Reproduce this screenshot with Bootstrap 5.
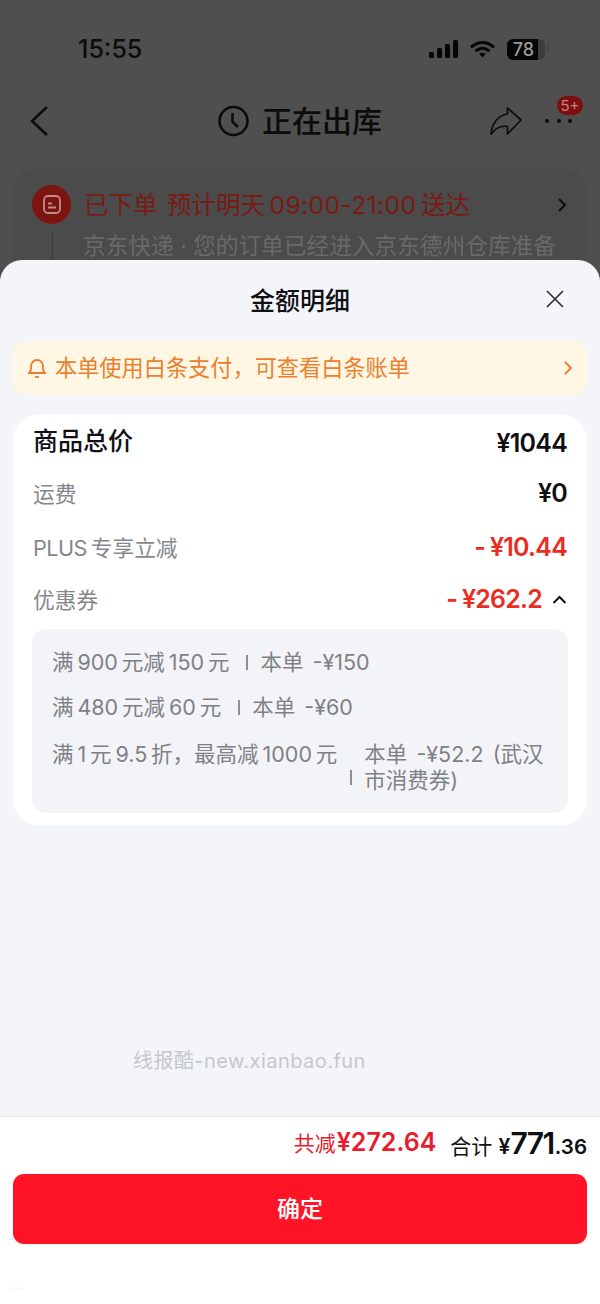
<!DOCTYPE html>
<html lang="zh-CN">
<head>
    <meta charset="UTF-8">
    <meta name="viewport" content="width=device-width, initial-scale=1.0">
    <title>金额明细</title>
    <link href="https://cdn.jsdelivr.net/npm/bootstrap@5.3.0/dist/css/bootstrap.min.css" rel="stylesheet">
    <style>
        html, body { height: 100%; }
        body { width: 600px; height: 1304px; overflow: hidden; background: #4f4f4f; color: #101014; font-family: Inter, "Noto Sans CJK SC", sans-serif; }
        .under { height: 260px; overflow: hidden; }
        .status-row { height: 96px; padding: 31px 51px 0 78px; }
        .status-time { font-size: 25px; font-weight: 500; line-height: 36px; color: #0c0c0c; }
        .status-icons { height: 36px; gap: 12px; }
        .batt { width: 38px; height: 21px; line-height: 21px; border-radius: 6px; background: linear-gradient(90deg, #060606 81%, #3e3e3e 81%); color: #9a9a9a; font-size: 18px; font-weight: 500; padding-right: 5px; text-align: center; }
        .batt-nub { width: 2px; height: 8px; margin-left: -10px; background: #454545; border-radius: 0 2px 2px 0; }
        .nav-row { height: 50px; padding: 0 28px; grid-template-columns: 1fr auto 1fr; }
        .nav-title { font-size: 30px; font-weight: 500; line-height: 50px; color: #0c0c0c; }
        .title-gap { gap: 13px; }
        .share-gap { gap: 23px; }
        .dots-wrap { width: 27px; height: 30px; }
        .dot-item { width: 4px; height: 4px; background: #0c0c0c; border-radius: 50%; }
        .dot-badge { top: -10px; right: -11px; width: 26px; height: 19px; background: #7c0f0f; color: #c98080; font-size: 15px; line-height: 19px; text-align: center; border-radius: 10px; }
        .order-card { margin: 22px 13px 0; height: 120px; padding: 17px 20px 0 19px; background: #4b4b4b; border-radius: 24px 24px 0 0; }
        .order-ico { width: 39px; height: 39px; border-radius: 50%; background: #7c1510; }
        .order-head { font-size: 24.6px; line-height: 38px; color: #7a1a14; margin-left: 5px; white-space: nowrap; word-spacing: 2px; }
        .head-time { letter-spacing: .4px; }
        .order-sub { font-size: 22.7px; line-height: 28px; color: #696969; margin: 8px 0 0 20px; padding: 0 0 10px 30px; border-left: 1px solid #3a3a3a; white-space: nowrap; }
        .sheet { height: 1044px; background: #f3f5f9; border-radius: 22px 22px 0 0; }
        .sheet-top { height: 82px; }
        .sheet-title { font-size: 25px; font-weight: 500; line-height: 82px; }
        .sheet-close { right: 36px; top: 30px; }
        .tip-bar { height: 52px; margin: 0 13px; padding: 0 14px; background: #fff7e3; border-radius: 12px; color: #ea7f2e; font-size: 22.2px; }
        .detail-card { margin: 20px 13px 0; padding: 10px 20px 12px; background: #fff; border-radius: 26px; }
        .line-a { height: 54px; }
        .line-b { height: 50px; }
        .line-top { height: 36px; margin-bottom: 7px; }
        .label-grey { font-size: 21.7px; color: #85878c; }
        .plus-tag { letter-spacing: -.6px; margin-right: 4px; }
        .label-main { font-size: 25px; font-weight: 500; }
        .amt { font-size: 25px; font-weight: 600; letter-spacing: -.8px; }
        .amt-first { padding-top: 4px; }
        .amt-red { color: #ea2d1e; }
        .minus-gap { margin-right: 5px; }
        .arrow-gap { gap: 10px; }
        .coupon-box { margin: 4px -1px 0 -1px; padding: 20px; background: #f3f4f8; border-radius: 14px; color: #808185; font-size: 21.5px; line-height: 26px; }
        .coupon-row { margin-top: 19px; }
        .coupon-row:first-child { margin-top: 0; }
        .coupon-row:last-child { margin-top: 21px; }
        .coupon-right { word-spacing: 3px; }
        .pipe { flex: none; width: 2px; height: 15px; background: #8f9095; margin: 0 12px 0 17px; }
        .pipe-low { margin-top: 20px; margin-left: 13px; }
        .spacer-area { flex: 1 1 auto; }
        .mark-text { padding-left: 133px; padding-bottom: 41px; font-size: 20px; line-height: 28px; color: #c6c7cb; letter-spacing: .45px; }
        .foot { height: 188px; background: #fff; border-top: 1px solid #ebecee; padding: 1px 13px 0; }
        .sum-row { height: 50px; gap: 14px; }
        .sum-red { color: #e81c2c; font-size: 21px; }
        .sum-red b { font-size: 25px; font-weight: 600; margin-left: 1px; }
        .sum-total { font-size: 21px; }
        .sum-total b { font-weight: 600; margin-left: 1px; }
        .big-n { font-size: 30px; letter-spacing: -1.5px; }
        .small-n { font-size: 20.5px; margin-left: 1px; }
        .ok-btn { height: 70px; margin-top: 6px; background: #ff1427; border: 0; border-radius: 11px; font-size: 23px; font-weight: 500; }
        .corner-mark { left: 7px; bottom: 11px; }
    </style>
</head>
<body class="position-relative">
    <div class="under">
        <div class="status-row d-flex justify-content-between align-items-start">
            <span class="status-time">15:55</span>
            <div class="status-icons d-flex align-items-center">
                <svg width="29" height="18" viewBox="0 0 29 18" fill="#060606"><rect x="0" y="12" width="5" height="6" rx="1.5"/><rect x="8" y="8" width="5" height="10" rx="1.5"/><rect x="16" y="4" width="5" height="14" rx="1.5"/><rect x="24" y="0" width="5" height="18" rx="1.5"/></svg>
                <svg width="25" height="18" viewBox="0 0 25 18"><path d="M2 6.500C8.500 1 16.500 1 23 6.500M6.500 10.500C10 7.500 15 7.500 18.500 10.500" fill="none" stroke="#060606" stroke-width="3" stroke-linecap="round"/><path d="M12.500 17.500l-3.300-3.700c1.900-1.500 4.700-1.500 6.600 0z" fill="#060606"/></svg>
                <div class="batt">78</div>
                <i class="batt-nub"></i>
            </div>
        </div>
        <div class="nav-row d-grid align-items-center">
            <svg width="20" height="30" viewBox="0 0 20 30"><path d="M19 1L4 15l15 14" fill="none" stroke="#0c0c0c" stroke-width="2.600"/></svg>
            <div class="title-gap d-flex align-items-center">
                <svg width="31" height="32" viewBox="0 0 31 32" fill="none" stroke="#0c0c0c" stroke-width="2.600"><circle cx="15.500" cy="16" r="14"/><path d="M14.500 8v9l5.500 5"/></svg>
                <span class="nav-title">正在出库</span>
            </div>
            <div class="share-gap d-flex align-items-center justify-content-end">
                <svg width="32" height="28" viewBox="0 0 32 28"><path d="M17.500 1L31 13 17.500 27v-7.500C11 18.500 5 21 1 27.500 1.500 17 8 8 17.500 7z" fill="none" stroke="#0c0c0c" stroke-width="1.700" stroke-linejoin="round"/></svg>
                <div class="dots-wrap position-relative d-flex align-items-center justify-content-between">
                    <i class="dot-item"></i><i class="dot-item"></i><i class="dot-item"></i>
                    <span class="dot-badge position-absolute">5+</span>
                </div>
            </div>
        </div>
        <div class="order-card">
            <div class="d-flex align-items-center justify-content-between">
                <div class="d-flex align-items-center gap-2">
                    <div class="order-ico d-flex align-items-center justify-content-center">
                        <svg width="18" height="19" viewBox="0 0 18 19" fill="none" stroke="#c08e8a" stroke-width="1.800"><rect x="1" y="1" width="16" height="17" rx="4"/><path d="M5 8.500h4M5 12.500h8"/></svg>
                    </div>
                    <span class="order-head">已下单 预计明天&#8201;<span class="head-time">09:00-21:00</span>&#8201;送达</span>
                </div>
                <svg width="10" height="16" viewBox="0 0 10 16"><path d="M2 2l6 6-6 6" fill="none" stroke="#0c0c0c" stroke-width="2"/></svg>
            </div>
            <div class="order-sub">京东快递 · 您的订单已经进入京东德州仓库准备</div>
        </div>
    </div>
    <div class="sheet d-flex flex-column">
        <div class="sheet-top position-relative text-center">
            <span class="sheet-title">金额明细</span>
            <svg class="sheet-close position-absolute" width="18" height="18" viewBox="0 0 18 18"><path d="M1 1l16 16M17 1L1 17" stroke="#2a2a2e" stroke-width="1.600"/></svg>
        </div>
        <div class="tip-bar d-flex align-items-center justify-content-between">
            <div class="d-flex align-items-center gap-2">
                <svg width="20" height="22" viewBox="0 0 20 22" fill="none" stroke="#ea7f2e" stroke-width="1.800"><path d="M2 16h16l-2-3V9a6 6 0 0 0-12 0v4z"/><path d="M8 20h4"/></svg>
                <span>本单使用白条支付，可查看白条账单</span>
            </div>
            <svg width="10" height="16" viewBox="0 0 10 16"><path d="M2 2l6 6-6 6" fill="none" stroke="#ea7f2e" stroke-width="2"/></svg>
        </div>
        <div class="detail-card">
            <div class="line-top d-flex align-items-center justify-content-between">
                <span class="label-main">商品总价</span><span class="amt amt-first">¥1044</span>
            </div>
            <div class="line-a d-flex align-items-center justify-content-between">
                <span class="label-grey">运费</span><span class="amt">¥0</span>
            </div>
            <div class="line-a d-flex align-items-center justify-content-between">
                <span class="label-grey"><span class="plus-tag">PLUS</span>专享立减</span><span class="amt amt-red"><span class="minus-gap">-</span>¥10.44</span>
            </div>
            <div class="line-b d-flex align-items-center justify-content-between">
                <span class="label-grey">优惠券</span>
                <div class="arrow-gap d-flex align-items-center">
                    <span class="amt amt-red"><span class="minus-gap">-</span>¥262.2</span>
                    <svg width="15" height="10" viewBox="0 0 15 10"><path d="M1.500 8l6-6 6 6" fill="none" stroke="#101014" stroke-width="2"/></svg>
                </div>
            </div>
            <div class="coupon-box">
                <div class="coupon-row d-flex align-items-center"><span>满&#8201;900&#8201;元减&#8201;150&#8201;元</span><i class="pipe"></i><span class="coupon-right">本单 -¥150</span></div>
                <div class="coupon-row d-flex align-items-center"><span>满&#8201;480&#8201;元减&#8201;60&#8201;元</span><i class="pipe"></i><span class="coupon-right">本单 -¥60</span></div>
                <div class="coupon-row d-flex align-items-center"><span class="align-self-start text-nowrap">满&#8201;1&#8201;元&#8201;9.5&#8201;折，最高减&#8201;1000&#8201;元</span><i class="pipe pipe-low"></i><span class="coupon-right text-nowrap">本单 -¥52.2 (武汉<br>市消费券)</span></div>
            </div>
        </div>
        <div class="spacer-area d-flex align-items-end">
            <div class="mark-text">线报酷-new.xianbao.fun</div>
        </div>
        <div class="foot">
            <div class="sum-row d-flex align-items-center justify-content-end">
                <span class="sum-red">共减<b>¥272.64</b></span>
                <span class="sum-total">合计<b> ¥<span class="big-n">771</span><span class="small-n">.36</span></b></span>
            </div>
            <button class="ok-btn btn w-100 text-white">确定</button>
        </div>
    </div>
    <svg class="corner-mark position-absolute" width="18" height="8" viewBox="0 0 18 8"><path d="M1 1l4 5 4-3 4 2 4-3" fill="none" stroke="#ececec" stroke-width="1"/></svg>
    <script src="https://cdn.jsdelivr.net/npm/bootstrap@5.3.0/dist/js/bootstrap.bundle.min.js"></script>
</body>
</html>
